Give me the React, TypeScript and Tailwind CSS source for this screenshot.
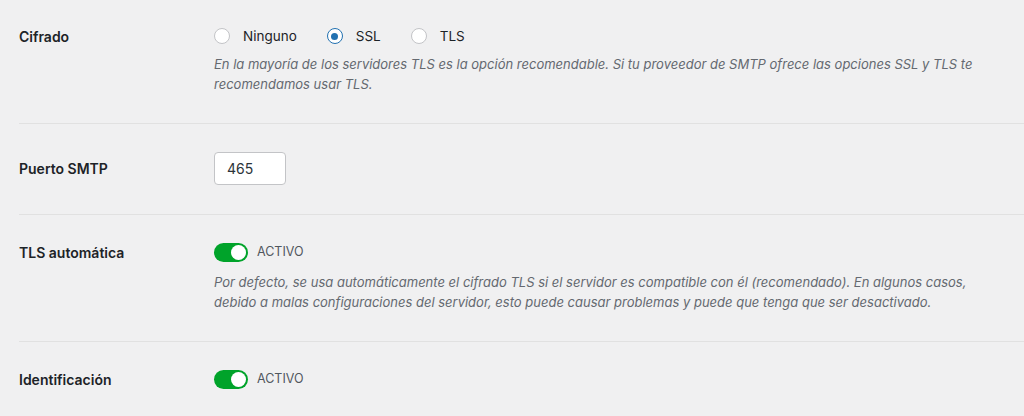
const Radio = ({ label, checked }: { label: string; checked?: boolean }) => {
    return (
        <label className="flex items-center gap-[13px]">
            <span
                className={`flex items-center justify-center w-[16px] h-[16px] rounded-full bg-white border ${checked ? "border-[#2271b1]" : "border-[#c3c4c7]"}`}
            >
                {checked && <span className="w-[7px] h-[7px] rounded-full bg-[#2271b1]" />}
            </span>
            <span className="text-[13.5px] text-[#1d2327]">{label}</span>
        </label>
    )
}

const Toggle = ({ label }: { label: string }) => {
    return (
        <div className="flex items-center gap-[9px] h-[19px]">
            <span className="flex items-center justify-end w-[34px] h-[19px] rounded-full bg-[#00a32a] pr-[2px]">
                <span className="w-[15px] h-[15px] rounded-full bg-white" />
            </span>
            <span className="text-[12.5px] text-[#50575e] uppercase">{label}</span>
        </div>
    )
}

const Row = ({ label, h, children, last }: { label: string; h: number; children: React.ReactNode; last?: boolean }) => {
    return (
        <div className={`flex items-start pt-[28px] ${last ? "pb-[28px]" : "pb-[29px] border-b border-[#e1e1e1]"}`}>
            <div
                className="w-[195px] shrink-0 flex items-center text-[14px] font-semibold text-[#1d2327]"
                style={{ height: h }}
            >
                {label}
            </div>
            <div className="flex-1">{children}</div>
        </div>
    )
}

const Desc = ({ children }: { children: React.ReactNode }) => {
    return <p className="mt-[10px] max-w-[770px] text-[13px] leading-[20px] italic text-[#646970]">{children}</p>
}

export default function App() {
    return (
        <div className="w-[1024px] h-[416px] overflow-hidden bg-[#f0f0f1] pl-[19px] font-['Inter',sans-serif]">
            <Row label="Cifrado" h={16}>
                <div className="flex items-center gap-[30px] h-[16px]">
                    <Radio label="Ninguno" />
                    <Radio label="SSL" checked />
                    <Radio label="TLS" />
                </div>
                <Desc>
                    En la mayoría de los servidores TLS es la opción recomendable. Si tu proveedor de SMTP ofrece las opciones SSL y TLS te recomendamos usar TLS.
                </Desc>
            </Row>
            <Row label="Puerto SMTP" h={33}>
                <input
                    type="text"
                    defaultValue="465"
                    className="w-[72px] h-[33px] px-[12px] rounded-[4px] border border-[#c3c4c7] bg-white text-[14px] text-[#2c3338] outline-none"
                />
            </Row>
            <Row label="TLS automática" h={19}>
                <Toggle label="Activo" />
                <Desc>
                    Por defecto, se usa automáticamente el cifrado TLS si el servidor es compatible con él (recomendado). En algunos casos, debido a malas configuraciones del servidor, esto puede causar problemas y puede que tenga que ser desactivado.
                </Desc>
            </Row>
            <Row label="Identificación" h={19} last>
                <Toggle label="Activo" />
            </Row>
        </div>
    )
}
